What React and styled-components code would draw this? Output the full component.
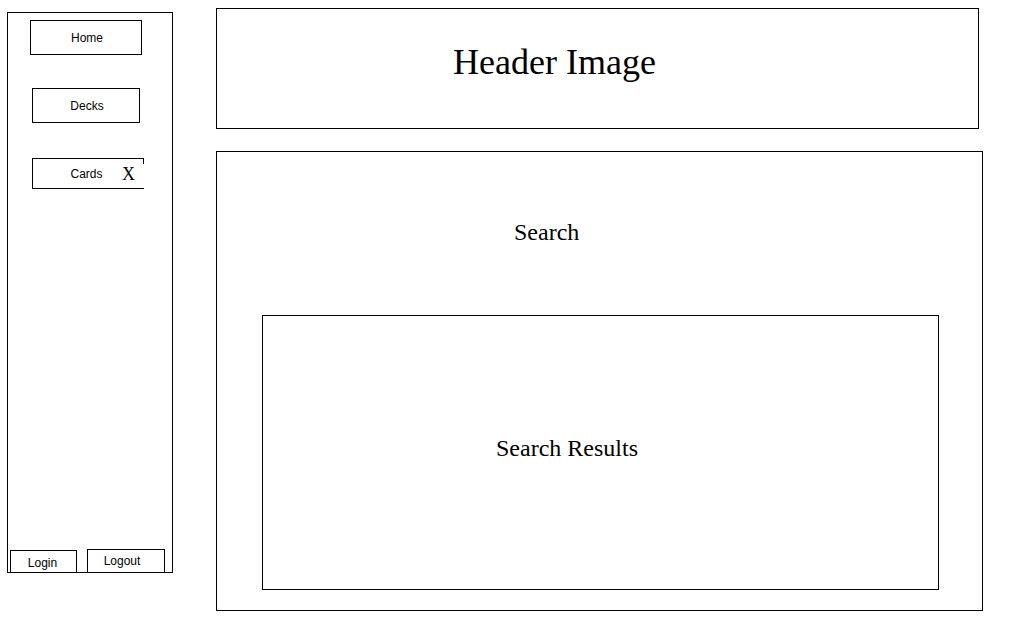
import styled, { createGlobalStyle } from "styled-components";

const GlobalStyle = createGlobalStyle`
  body {
    margin: 0;
    background: #fff;
    color: #000;
  }
`;

const Page = styled.div`
  display: flex;
  align-items: flex-start;
  padding: 8px 0 0 7px;
`;

const Sidebar = styled.aside`
  box-sizing: border-box;
  display: flex;
  flex-direction: column;
  width: 166px;
  height: 561px;
  margin-top: 4px;
  border: 1px solid #000;
`;

// $shift nudges the label off centre, as in the sketch
const NavButton = styled.div`
  position: relative;
  box-sizing: border-box;
  display: flex;
  align-items: center;
  justify-content: center;
  width: ${(p) => p.$w}px;
  height: ${(p) => p.$h}px;
  margin: ${(p) => p.$top}px 0 0 ${(p) => p.$left}px;
  padding-left: ${(p) => Math.max(0, p.$shift || 0) * 2}px;
  padding-right: ${(p) => Math.max(0, -(p.$shift || 0)) * 2}px;
  border: 1px solid #000;
  border-right: ${(p) => (p.$open ? "none" : "1px solid #000")};
  font-family: "Liberation Sans", Arial, sans-serif;
  font-size: 12px;

  ${(p) =>
    p.$open &&
    `
    &::after {
      content: "";
      position: absolute;
      right: 0;
      top: 0;
      width: 1px;
      height: 5px;
      background: #000;
    }
  `}
`;

const CloseMark = styled.span`
  position: absolute;
  right: 9px;
  top: 5px;
  font-family: "Liberation Serif", "Times New Roman", serif;
  font-size: 18px;
  line-height: 20px;
`;

const AuthRow = styled.div`
  display: flex;
  align-items: flex-end;
  gap: 10px;
  margin-top: auto;
  padding-left: 2px;
`;

const AuthButton = styled.div`
  box-sizing: border-box;
  display: flex;
  align-items: center;
  justify-content: center;
  width: ${(p) => p.$w}px;
  height: ${(p) => p.$h}px;
  padding-right: ${(p) => p.$pr || 0}px;
  padding-top: ${(p) => p.$pt || 0}px;
  border: 1px solid #000;
  border-bottom: none;
  font-family: "Liberation Sans", Arial, sans-serif;
  font-size: 12px;
`;

const Content = styled.main`
  display: flex;
  flex-direction: column;
  margin-left: 43px;
`;

const Header = styled.header`
  box-sizing: border-box;
  width: 763px;
  height: 121px;
  border: 1px solid #000;
  padding: 32px 0 0 236px;
`;

const SerifTitle = styled.div`
  font-family: "Liberation Serif", "Times New Roman", serif;
  font-size: ${(p) => p.$size}px;
  line-height: ${(p) => p.$lh}px;
  white-space: nowrap;
`;

const SearchPanel = styled.section`
  box-sizing: border-box;
  width: 767px;
  height: 460px;
  margin-top: 22px;
  border: 1px solid #000;
  padding: 66px 0 0 45px;
`;

const SearchLabel = styled(SerifTitle)`
  padding-left: 252px;
`;

const Results = styled.div`
  box-sizing: border-box;
  width: 677px;
  height: 275px;
  margin-top: 69px;
  border: 1px solid #000;
  padding: 118px 0 0 233px;
`;

export default function App() {
  return (
    <>
      <GlobalStyle />
      <Page>
        <Sidebar>
          <NavButton $w={112} $h={35} $top={7} $left={22} $shift={1}>
            Home
          </NavButton>
          <NavButton $w={108} $h={35} $top={33} $left={24} $shift={1}>
            Decks
          </NavButton>
          <NavButton $w={112} $h={31} $top={35} $left={24} $shift={-2} $open>
            Cards
            <CloseMark>X</CloseMark>
          </NavButton>
          <AuthRow>
            <AuthButton $w={67} $h={22} $pr={2} $pt={2}>
              Login
            </AuthButton>
            <AuthButton $w={78} $h={23} $pr={8}>
              Logout
            </AuthButton>
          </AuthRow>
        </Sidebar>
        <Content>
          <Header>
            <SerifTitle $size={36} $lh={42}>
              Header Image
            </SerifTitle>
          </Header>
          <SearchPanel>
            <SearchLabel $size={24} $lh={28}>
              Search
            </SearchLabel>
            <Results>
              <SerifTitle $size={24} $lh={28}>
                Search Results
              </SerifTitle>
            </Results>
          </SearchPanel>
        </Content>
      </Page>
    </>
  );
}
